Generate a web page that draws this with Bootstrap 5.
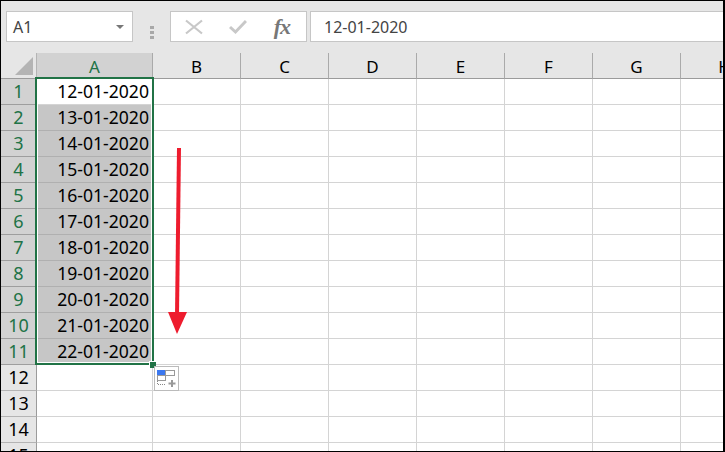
<!DOCTYPE html>
<html>
  <head>
    <title>Sheet</title>
    <link href="https://cdn.jsdelivr.net/npm/bootstrap@5.3.0/dist/css/bootstrap.min.css" rel="stylesheet">
    <style>
      html, body { height: 100%; overflow: hidden; }
      body {
        font-family: "Noto Sans", sans-serif;
        background: #000;
        padding: 1px 2px 1px 1px;
      }
      .app { height: 450px; background: #e6e6e6; overflow: hidden; position: relative; }
      .fbar { height: 52px; padding: 10px 0 0 5px; }
      .fbox { height: 31px; background: #fff; border: 1px solid #c6c6c6; color: #444; font-size: 16px; }
      .name-box { width: 127px; padding: 0 8px 0 6px; }
      .caret { width: 0; height: 0; border-left: 4px solid transparent; border-right: 4px solid transparent; border-top: 4px solid #777; margin-top: 1px; }
      .grip { width: 37px; }
      .grip i { display: block; width: 4px; height: 3px; background: #a8a8a8; margin: 1px 0; }
      .fn-box { width: 137px; margin-right: 3px; padding: 0 16px 0 14px; }
      .fn-box svg { display: block; }
      .fx { font-family: "Liberation Serif", serif; font-style: italic; font-weight: 700; font-size: 22px; letter-spacing: -1px; color: #777; line-height: 1; }
      .val-box { flex: 1; padding: 0 13px; border-right: 0; }

      .sheet { border-collapse: separate; border-spacing: 0; table-layout: fixed; width: 768px; max-width: none; color: #000; background: #fff; }
      .sheet th, .sheet td { padding: 0; border-right: 1px solid #d4d4d4; border-bottom: 1px solid #d4d4d4; height: 26px; overflow: hidden; white-space: nowrap; }
      .sheet thead th { height: 26px; padding-top: 2px; background: #e6e6e6; font-weight: 400; font-size: 17px; text-align: center; border-bottom: 1px solid #9b9b9b; border-right: 1px solid #aaa; vertical-align: bottom; line-height: 23px; }
      .sheet tbody th { background: #e6e6e6; font-weight: 400; font-size: 18px; text-align: center; border-right: 1px solid #9b9b9b; border-bottom: 1px solid #b4b4b4; line-height: 25px; }
      .sheet tbody th.on { background: #d2d2d2; color: #217346; border-bottom-color: #9e9e9e; }
      .sheet thead th.on { background: #d2d2d2; color: #217346; }
      .sheet thead th.corner { border-right: 1px solid #b4b4b4; position: relative; }
      .corner i { position: absolute; right: 3px; bottom: 3px; width: 0; height: 0; border-left: 18px solid transparent; border-bottom: 18px solid #b4b4b4; }
      .sheet td.dt { font-size: 17.6px; text-align: right; padding-right: 3px; line-height: 25px; }
      .sheet td.dt.fill { background: #c6c6c6; border-bottom-color: #b0b0b0; }

      .sel { position: absolute; left: 34px; top: 76px; width: 119px; height: 288px; border: 2px solid #217346; box-shadow: inset 0 0 0 1px #fff; pointer-events: none; }
      .handle { position: absolute; left: 148px; top: 360px; width: 7px; height: 7px; background: #217346; border: 1px solid #fff; border-width: 1px 0 0 1px; }
      .opts { position: absolute; left: 153px; top: 365px; width: 25px; height: 25px; background: #fff; border: 1px solid #bbb; }
      .opts svg { display: block; }
      .arrow { position: absolute; left: 160px; top: 145px; }
    </style>
  </head>
  <body>
    <div class="app">
      <div class="fbar d-flex">
        <div class="fbox name-box d-flex align-items-center justify-content-between"><span>A1</span><span class="caret"></span></div>
        <div class="grip d-flex flex-column align-items-center justify-content-center"><i></i><i></i><i></i></div>
        <div class="fbox fn-box d-flex align-items-center justify-content-between">
          <svg width="18" height="16" viewBox="0 0 18 16"><path d="M1 1.5 L17 14.5 M17 1.5 L1 14.5" stroke="#c8c8c8" stroke-width="2.2" fill="none"/></svg>
          <svg width="18" height="16" viewBox="0 0 18 16"><path d="M1 8 L6.5 13 L17 2" stroke="#c8c8c8" stroke-width="3" fill="none"/></svg>
          <span class="fx">fx</span>
        </div>
        <div class="fbox val-box d-flex align-items-center">12-01-2020</div>
      </div>
      <table class="sheet">
        <colgroup><col style="width:36px"><col style="width:116px"><col style="width:88px"><col style="width:88px"><col style="width:88px"><col style="width:88px"><col style="width:88px"><col style="width:88px"><col style="width:88px"></colgroup>
        <thead>
          <tr><th class="corner"><i></i></th><th class="on">A</th><th>B</th><th>C</th><th>D</th><th>E</th><th>F</th><th>G</th><th>H</th></tr>
        </thead>
        <tbody>
          <tr><th class="on">1</th><td class="dt">12-01-2020</td><td></td><td></td><td></td><td></td><td></td><td></td><td></td></tr>
          <tr><th class="on">2</th><td class="dt fill">13-01-2020</td><td></td><td></td><td></td><td></td><td></td><td></td><td></td></tr>
          <tr><th class="on">3</th><td class="dt fill">14-01-2020</td><td></td><td></td><td></td><td></td><td></td><td></td><td></td></tr>
          <tr><th class="on">4</th><td class="dt fill">15-01-2020</td><td></td><td></td><td></td><td></td><td></td><td></td><td></td></tr>
          <tr><th class="on">5</th><td class="dt fill">16-01-2020</td><td></td><td></td><td></td><td></td><td></td><td></td><td></td></tr>
          <tr><th class="on">6</th><td class="dt fill">17-01-2020</td><td></td><td></td><td></td><td></td><td></td><td></td><td></td></tr>
          <tr><th class="on">7</th><td class="dt fill">18-01-2020</td><td></td><td></td><td></td><td></td><td></td><td></td><td></td></tr>
          <tr><th class="on">8</th><td class="dt fill">19-01-2020</td><td></td><td></td><td></td><td></td><td></td><td></td><td></td></tr>
          <tr><th class="on">9</th><td class="dt fill">20-01-2020</td><td></td><td></td><td></td><td></td><td></td><td></td><td></td></tr>
          <tr><th class="on">10</th><td class="dt fill">21-01-2020</td><td></td><td></td><td></td><td></td><td></td><td></td><td></td></tr>
          <tr><th class="on">11</th><td class="dt fill">22-01-2020</td><td></td><td></td><td></td><td></td><td></td><td></td><td></td></tr>
          <tr><th>12</th><td></td><td></td><td></td><td></td><td></td><td></td><td></td><td></td></tr>
          <tr><th>13</th><td></td><td></td><td></td><td></td><td></td><td></td><td></td><td></td></tr>
          <tr><th>14</th><td></td><td></td><td></td><td></td><td></td><td></td><td></td><td></td></tr>
          <tr><th>15</th><td></td><td></td><td></td><td></td><td></td><td></td><td></td><td></td></tr>
        </tbody>
      </table>
      <div class="sel"></div>
      <div class="handle"></div>
      <div class="opts">
        <svg width="23" height="23" viewBox="0 0 23 23">
          <rect x="2.5" y="3.5" width="8" height="5" fill="#3b78f0" stroke="#3b78f0"/>
          <rect x="10.5" y="3.5" width="9" height="5" fill="#fff" stroke="#999"/>
          <rect x="2.5" y="8.5" width="8" height="5" fill="#fff" stroke="#999"/>
          <path d="M2.5 14 V17.5 H11" fill="none" stroke="#888" stroke-dasharray="1 1"/>
          <path d="M17 13 V20 M13.5 16.5 H20.5" stroke="#999" stroke-width="2" fill="none"/>
        </svg>
      </div>
      <svg class="arrow" width="36" height="195" viewBox="0 0 36 195">
        <path d="M18 2 L16 170" stroke="#ee1c2e" stroke-width="4" fill="none"/>
        <path d="M7 166 L26 166 L16 188 Z" fill="#ee1c2e"/>
      </svg>
    </div>
    <script src="https://cdn.jsdelivr.net/npm/bootstrap@5.3.0/dist/js/bootstrap.bundle.min.js"></script>
  </body>
</html>
